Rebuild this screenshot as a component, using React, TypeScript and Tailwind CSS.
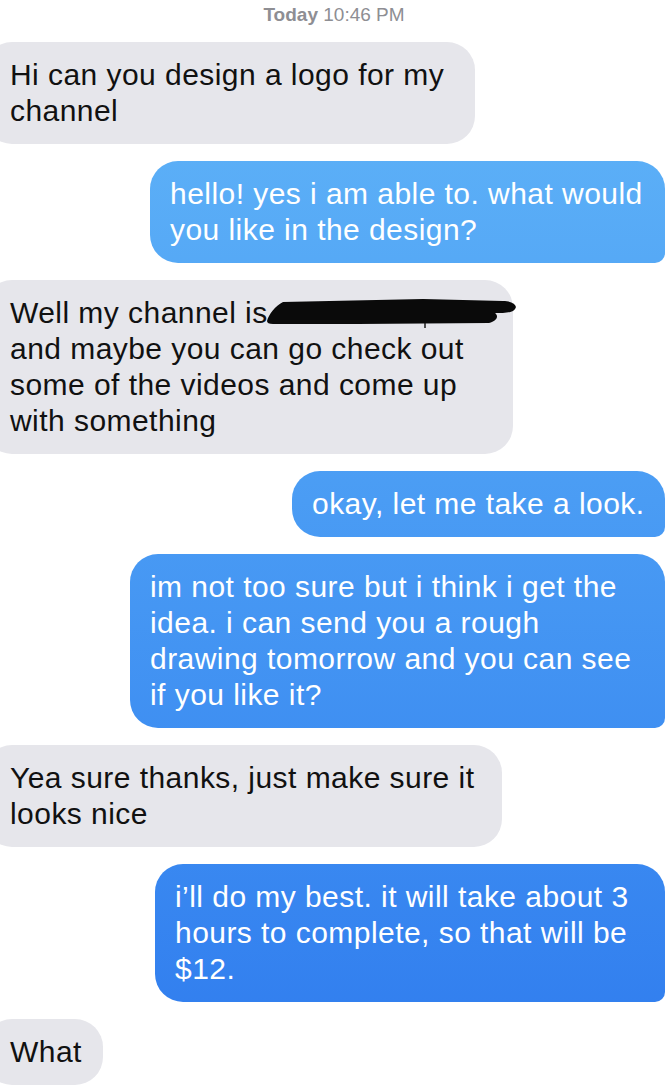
import clsx from "clsx";

type Msg = {
  from: "them" | "me";
  lines: string[];
  width: string;
  redacted?: boolean;
};

const messages: Msg[] = [
  { from: "them", lines: ["Hi can you design a logo for my", "channel"], width: "w-[491px]" },
  { from: "me", lines: ["hello! yes i am able to. what would", "you like in the design?"], width: "w-[515px]" },
  {
    from: "them",
    lines: ["Well my channel is", "and maybe you can go check out", "some of the videos and come up", "with something"],
    width: "w-[529px]",
    redacted: true,
  },
  { from: "me", lines: ["okay, let me take a look."], width: "w-[373px]" },
  {
    from: "me",
    lines: [
      "im not too sure but i think i get the",
      "idea. i can send you a rough",
      "drawing tomorrow and you can see",
      "if you like it?",
    ],
    width: "w-[535px]",
  },
  { from: "them", lines: ["Yea sure thanks, just make sure it", "looks nice"], width: "w-[518px]" },
  {
    from: "me",
    lines: ["i\u2019ll do my best. it will take about 3", "hours to complete, so that will be", "$12."],
    width: "w-[510px]",
  },
  { from: "them", lines: ["What"], width: "w-[119px]" },
];

function Redaction() {
  return (
    <svg
      className="absolute left-[283px] top-[18px]"
      width="252"
      height="32"
      viewBox="0 0 252 32"
      fill="none"
    >
      <path
        d="M0 23 C2 16 8 8 16 4 L156 1 L236 3 C246 3 251 8 248 11 C246 15 236 15 228 15 C232 18 230 23 222 25 L90 26 L6 26 C2 26 0 25 0 23 Z"
        fill="#0a0a0a"
      />
      <path d="M158 25 L158 30" stroke="#1a1a1a" strokeWidth="1.5" />
    </svg>
  );
}

function Bubble({ msg }: { msg: Msg }) {
  const mine = msg.from === "me";
  return (
    <div className={clsx("flex", mine ? "justify-end pr-[3px]" : "justify-start")}>
      <div
        className={clsx(
          "relative py-[15px] text-[30px] leading-[36px] tracking-[0.015em] whitespace-nowrap",
          msg.width,
          mine
            ? "rounded-[28px] rounded-br-[10px] bg-linear-to-b from-[#63b7f8] to-[#2f7bee] bg-fixed pl-[20px] text-white"
            : "-ml-4 rounded-[28px] bg-[#e6e6eb] pl-[26px] text-[#111111]",
        )}
      >
        {msg.lines.map((line, i) => (
          <div key={i}>{line}</div>
        ))}
        {msg.redacted ? <Redaction /> : null}
      </div>
    </div>
  );
}

export default function App() {
  return (
    <div
      className="min-h-[1086px] overflow-hidden bg-white"
      style={{ fontFamily: '"Liberation Sans", Arial, sans-serif' }}
    >
      <div className="pt-[3px] text-center text-[19px] leading-[24px] text-[#8e8e93]">
        <span className="font-bold">Today</span> 10:46 PM
      </div>
      <div className="mt-[15px] flex flex-col gap-[17px]">
        {messages.map((m, i) => (
          <Bubble key={i} msg={m} />
        ))}
      </div>
    </div>
  );
}
